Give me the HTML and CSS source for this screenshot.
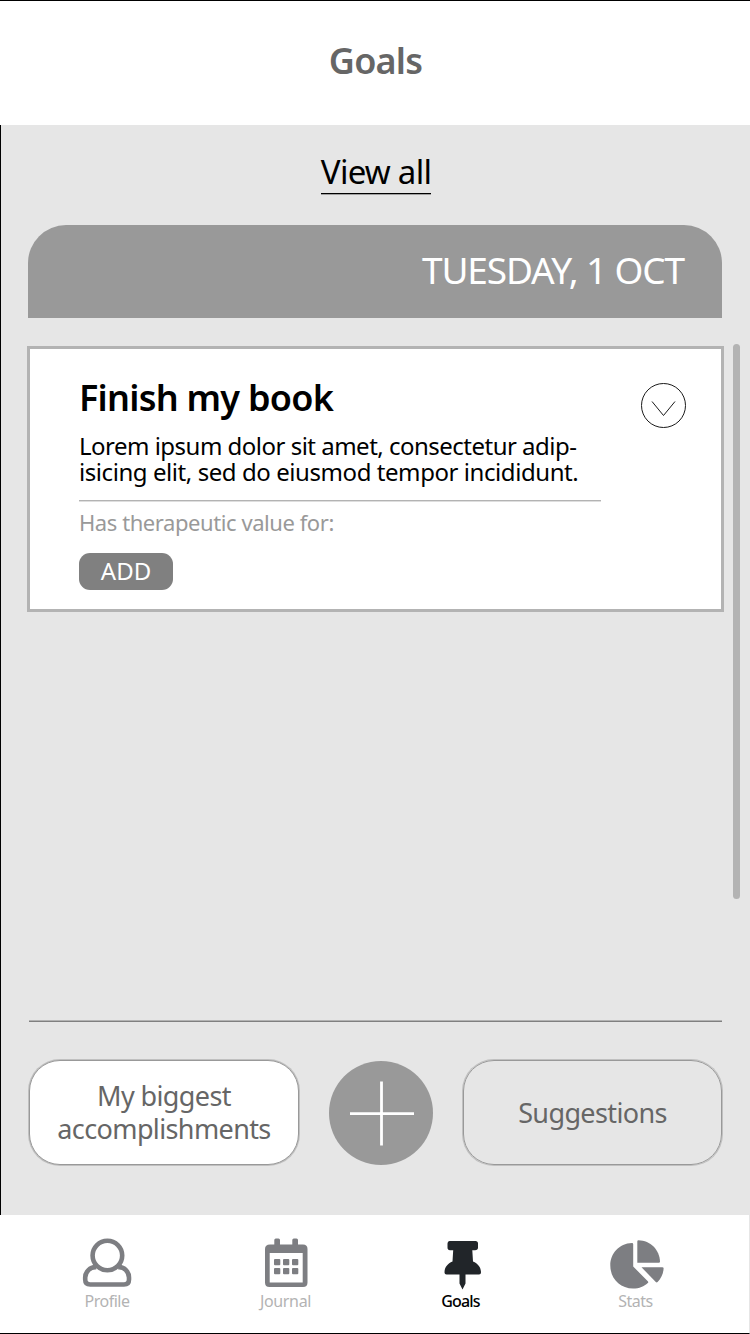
FILE: index.html
```html
<!DOCTYPE html>
<html lang="en">
<head>
<meta charset="utf-8">
<title>Goals</title>
<link rel="stylesheet" href="styles.css">
</head>
<body>
<div class="app">
  <header class="header"><h1 class="title">Goals</h1></header>
  <main class="main">
    <a class="view-all">View all</a>
    <div class="date"><span class="date-text">TUESDAY, 1 OCT</span></div>
    <article class="card">
      <div class="card-body">
        <h2 class="card-title">Finish my book</h2>
        <p class="card-text"><span class="line-one">Lorem ipsum dolor sit amet, consectetur adip-</span><br><span class="line-two">isicing elit, sed do eiusmod tempor incididunt.</span></p>
        <p class="card-note">Has therapeutic value for:</p>
        <button class="add">ADD</button>
      </div>
      <svg class="chevron" width="46" height="46" viewBox="0 0 46 46" fill="none" stroke="#1a1a1a"><circle cx="22.500" cy="23.500" r="22"/><path d="M11 19.500 22.500 33.500 34 19.500"/></svg>
    </article>
    <div class="scrollbar"></div>
    <div class="actions">
      <button class="pill pill-filled"><span>My biggest</span><span>accomplishments</span></button>
      <svg class="plus" width="104" height="104" viewBox="0 0 104 104"><circle cx="52" cy="52" r="52" fill="#999"/><path d="M21 52.700H85M52.500 20.500V84.500" stroke="#fff" stroke-width="2.800"/></svg>
      <button class="pill pill-outline"><span>Suggestions</span></button>
    </div>
  </main>
  <nav class="nav">
    <a class="tab tab-profile">
      <svg class="tab-icon" width="56" height="56" viewBox="0 0 56 56" fill="none" stroke="#7d7e82" stroke-width="4.600"><circle cx="28.400" cy="20.500" r="14.800"/><path d="M17.500 32.200C11 31.500 6.200 37 6.200 42.500V44.500Q6.200 49.500 11.200 49.500H45Q50 49.500 50 44.500V42.500C50 37 45.500 31.500 39 32.200"/></svg>
      <span class="tab-label">Profile</span>
    </a>
    <a class="tab tab-journal">
      <svg class="tab-icon" width="56" height="56" viewBox="0 0 56 56" fill="#7d7e82"><path fill-rule="evenodd" d="M11 9.500H15.300V5Q15.300 3.500 16.800 3.500H19.500Q21 3.500 21 5V9.500H33.300V5Q33.300 3.500 34.800 3.500H37.500Q39 3.500 39 5V9.500H44Q48.500 9.500 48.500 14V47.500Q48.500 52 44 52H10.500Q6 52 6 47.500V14Q6 9.500 11 9.500ZM10.700 18V47.500H43.700V18Z"/><g><rect x="15" y="24" width="6.300" height="6.300" rx="1"/><rect x="24" y="24" width="6.300" height="6.300" rx="1"/><rect x="33" y="24" width="6.300" height="6.300" rx="1"/><rect x="15" y="33" width="6.300" height="6.300" rx="1"/><rect x="24" y="33" width="6.300" height="6.300" rx="1"/><rect x="33" y="33" width="6.300" height="6.300" rx="1"/></g></svg>
      <span class="tab-label">Journal</span>
    </a>
    <a class="tab tab-goals">
      <svg class="tab-icon" width="56" height="56" viewBox="0 0 56 56" fill="#212529"><path d="M17.500 6H43.500Q46 6 46 8.500V12.500Q46 15.200 43 15.200H40.300L41 26.500C46 28.500 49 32.500 49 37.500Q49 39.500 47 39.500H33.500V48.500L30.500 54.500 27.500 48.500V39.500H14.500Q12.500 39.500 12.500 37.500C12.500 32.500 15.500 28.500 20.500 26.500L21.200 15.200H18Q15.500 15.200 15.500 12.500V8.500Q15.500 6 17.500 6Z"/></svg>
      <span class="tab-label">Goals</span>
    </a>
    <a class="tab tab-stats">
      <svg class="tab-icon" width="56" height="56" viewBox="0 0 56 56" fill="#7d7e82"><path d="M25.200 9Q25.200 8 24 8C11 8.500 2.300 18.500 2.300 30.500C2.300 43.500 12 53.500 25 53.500C31.500 53.500 36 51.500 39.800 48Q40.700 47.200 39.800 46.300L25.200 31.500Z"/><path d="M29.300 6.500Q29.300 5.300 30.500 5.300C42.500 5.500 51.500 15 52 26.500Q52 27.700 50.800 27.700H29.300Z"/><path d="M33.500 32.300H54.300Q55.700 32.300 55.600 33.500C55.300 39 53 43.500 49.600 47Q48.700 47.900 47.800 47Z"/></svg>
      <span class="tab-label">Stats</span>
    </a>
  </nav>
</div>
</body>
</html>
```
FILE: styles.css
```css
* { box-sizing: border-box; }
body, h1, h2, p { margin: 0; }
body { font-family: "Noto Sans", "Open Sans", sans-serif; color: #000; background: #fff; }
button { font: inherit; border: 0; padding: 0; }
span, a { white-space: nowrap; }
.app { width: 750px; height: 1334px; display: flex; flex-direction: column; overflow: hidden; }

.header { height: 125px; border-top: 1px solid #000; padding: 38px 0 0 1px; text-align: center; }
.title { font-size: 36px; line-height: 44px; font-weight: 600; letter-spacing: -0.8px; color: #666; }

.main { position: relative; height: 1090px; background: #e6e6e6; border-left: 1px solid #000; display: flex; flex-direction: column; padding: 24px 26px 0; }
.view-all { align-self: center; height: 45px; margin-left: 1px; font-size: 33px; line-height: 46px; letter-spacing: -0.75px; border-bottom: 1px solid #000; box-shadow: 0 1px #a0a0a0; }
.date { height: 93px; margin: 31px 2px 0 1px; background: #999; border-radius: 38px 38px 0 0; padding-right: 38px; text-align: right; }
.date-text { font-size: 37px; line-height: 90px; letter-spacing: -1.15px; color: #fff; }

.card { height: 266px; margin-top: 28px; background: #fff; border: 3px solid #b3b3b3; display: flex; justify-content: space-between; padding: 32px 34px 0 49px; }
.card-body { width: 522px; }
.card-title { height: 40px; font-size: 36px; line-height: 34px; font-weight: 600; letter-spacing: -0.75px; white-space: nowrap; }
.card-text { height: 80px; padding-top: 12px; font-size: 24px; line-height: 26px; border-bottom: 1px solid #b3b3b3; box-shadow: 0 1px #dedede; white-space: nowrap; }
.line-one { letter-spacing: -0.51px; }
.line-two { letter-spacing: -0.43px; }
.card-note { margin-top: 6px; font-size: 22px; line-height: 30px; letter-spacing: -0.43px; color: #999; }
.add { display: block; width: 94px; height: 37px; margin-top: 16px; border-radius: 11px; background: #808080; color: #fff; font-size: 24px; line-height: 35px; padding-bottom: 2px; }
.chevron { flex: none; margin-top: 1px; }
.scrollbar { position: absolute; left: 732px; top: 219px; width: 7px; height: 555px; border-radius: 4px; background: #b3b3b3; }

.actions { display: flex; align-items: flex-start; justify-content: space-between; width: 693px; height: 145px; margin: 408px 0 0 2px; padding-top: 39px; border-top: 1px solid #b3b3b3; box-shadow: inset 0 1px #808080; }
.pill { display: flex; flex-direction: column; align-items: center; justify-content: center; height: 105px; border: 1px solid #999; box-shadow: 0 0 0 1px rgba(153, 153, 153, 0.5); border-radius: 31px; padding-bottom: 1px; font-size: 27px; line-height: 33px; letter-spacing: -0.62px; color: #666; }
.pill-filled { width: 270px; background: #fff; }
.pill-outline { width: 259px; background: transparent; }
.plus { margin-top: 1px; }

.nav { height: 119px; display: flex; border-bottom: 1px solid #000; border-right: 1px solid #e6e6e6; padding: 20px 0 0 18px; }
.tab { display: flex; flex-direction: column; align-items: center; color: #b3b3b3; }
.tab-profile { width: 178px; }
.tab-journal { width: 182px; }
.tab-journal .tab-label { padding-right: 3px; letter-spacing: -0.35px; }
.tab-goals { width: 163px; color: #000; font-weight: 500; }
.tab-stats { width: 189px; }
.tab-label { font-size: 16px; line-height: 20px; letter-spacing: -0.5px; }
.tab-goals .tab-label { padding-left: 2px; letter-spacing: -0.8px; }
```
